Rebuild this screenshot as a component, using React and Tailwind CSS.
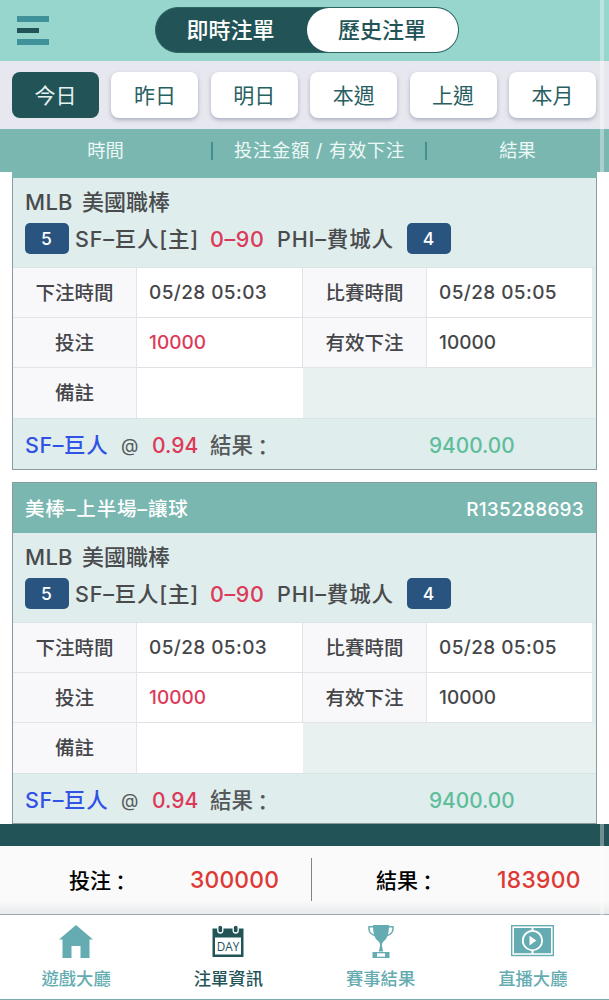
import React from "react";

const days = ["今日", "昨日", "明日", "本週", "上週", "本月"];

function Header() {
  return (
    <header className="flex h-[61px] shrink-0 items-start bg-[#97d6cd] pt-[7px]">
      <div className="ml-[17px] mt-[9px] flex w-8 flex-col gap-[6px]">
        <span className="h-[5.5px] w-8 bg-[#3f919a]" />
        <span className="h-[5.5px] w-[22px] bg-[#225457]" />
        <span className="h-[5.5px] w-8 bg-[#3f919a]" />
      </div>
      <div className="ml-[106px] flex h-[46px] w-[304px] rounded-full border border-[#2c6563] bg-[#225457] text-[22px] font-medium">
        <div className="flex w-[151px] items-center justify-center pr-0.5 pt-px text-white">即時注單</div>
        <div className="flex w-[151px] items-center justify-center rounded-full bg-white pr-px pt-px text-[#225457]">歷史注單</div>
      </div>
    </header>
  );
}

function DayTabs() {
  return (
    <nav className="flex h-[68px] shrink-0 gap-[12.4px] bg-[#e7e8ef] pl-3 pt-[11px]">
      {days.map((d, i) => (
        <button
          key={d}
          className={
            "flex h-[46px] w-[87px] shrink-0 items-center justify-center rounded-[8px] text-[21px] pt-px " +
            (i === 0
              ? "bg-[#225457] text-[#e4f2ef]"
              : "bg-white text-[#286062] shadow-[0_2px_4px_rgba(60,65,110,0.35)]")
          }
        >
          {d}
        </button>
      ))}
    </nav>
  );
}

function ColumnHeads() {
  return (
    <div className="flex h-[43px] shrink-0 items-center bg-[#7ab7b1] text-[18.3px] text-[#edf9f6]">
      <span className="w-[211px] pt-px text-center">時間</span>
      <span className="h-[18px] w-[2px] bg-[#438f8e]" />
      <span className="w-[212px] whitespace-pre pl-px pt-px text-center tracking-[0.7px]">投注金額 / 有效下注</span>
      <span className="h-[18px] w-[2px] bg-[#438f8e]" />
      <span className="w-[181px] pt-px text-center">結果</span>
    </div>
  );
}

function Badge({ children }) {
  return (
    <span className="flex h-[31px] w-[44px] shrink-0 items-center justify-center rounded-[5px] bg-[#28547f] pr-px pt-px text-[17.5px] font-medium text-white">
      {children}
    </span>
  );
}

function Colon() {
  return <span className="inline-block translate-y-[2px] -translate-x-px">：</span>;
}

function Label({ children, className = "" }) {
  return (
    <div className={"flex items-center justify-center border-r border-[#e2e4ea] bg-[#f8f8fb] pt-0.5 text-[19.5px] font-medium " + className}>
      {children}
    </div>
  );
}

function Value({ children, className = "" }) {
  return (
    <div className={"flex items-center border-[#dfe2e6] bg-white pl-3 pt-0.5 text-[19px] " + className}>{children}</div>
  );
}

function Bet() {
  return (
    <>
      <div className="h-[89px] pl-3 pt-[9px] text-[#494b4d]">
        <div className="flex h-[30px] items-center whitespace-pre text-[22px] leading-[30px]">
          <span className="w-[57px] text-[22px] font-medium tracking-[0.3px]">MLB</span>
          <span className="font-medium">美國職棒</span>
        </div>
        <div className="mt-[6px] flex h-[31px] items-center whitespace-nowrap text-[21.5px]">
          <Badge>5</Badge>
          <span className="ml-[6px] w-[135px] pt-0.5 font-medium tracking-[0.8px]">SF–巨人[主]</span>
          <span className="w-[67px] pt-0.5 font-medium tracking-[0.6px] text-[#dc3a59]">0–90</span>
          <span className="w-[130px] pt-0.5 font-medium tracking-[0.85px]">PHI–費城人</span>
          <Badge>4</Badge>
        </div>
      </div>
      <div className="grid h-[151px] grid-cols-[124px_166px_124px_165px] grid-rows-[50px_50px_50px] border-t border-[#dbe4e6] text-[#454649]">
        <Label className="border-b">下注時間</Label>
        <Value className="border-b border-r font-medium tracking-[0.4px]">05/28 05:03</Value>
        <Label className="border-b">比賽時間</Label>
        <Value className="border-b font-medium tracking-[0.4px]">05/28 05:05</Value>
        <Label className="border-b">投注</Label>
        <Value className="border-b border-r font-medium text-[#dc3a59]">10000</Value>
        <Label className="border-b">有效下注</Label>
        <Value className="border-b font-medium">10000</Value>
        <Label>備註</Label>
        <Value />
        <div className="col-span-2 -mr-1 bg-[#e8f0f0]" />
      </div>
      <div className="flex h-[50px] items-center whitespace-nowrap border-t border-[#d8e5e7] pl-3 pt-1 text-[21.5px] text-[#55585a]">
        <span className="w-[96px] font-medium tracking-[0.6px] text-[#3152e6]">SF–巨人</span>
        <span className="w-[31px] text-[18px]">@</span>
        <span className="w-[58px] text-[21px] font-medium text-[#dc3a59]">0.94</span>
        <span className="w-[219px] font-medium">結果<Colon /></span>
        <span className="text-[20.8px] font-medium text-[#5fbd9c]">9400.00</span>
      </div>
    </>
  );
}

const HomeIcon = () => (
  <svg width="34" height="34" viewBox="0 0 34 34" fill="#64acb1">
    <path d="M17 0 34 14.5H30.5V33H21.5V21H12.5V33H3.5V14.5H0Z" />
  </svg>
);

const DayIcon = () => (
  <svg width="32" height="34" viewBox="0 0 32 34">
    <path d="M.5 3.5H31.5V32H.5Z" fill="#225457" />
    <path d="M3 12.5H29V29.5H3Z" fill="#fff" />
    <rect x="5.8" y="0" width="5" height="8" rx="2.5" fill="#225457" stroke="#fff" strokeWidth="1.3" />
    <rect x="21.2" y="0" width="5" height="8" rx="2.5" fill="#225457" stroke="#fff" strokeWidth="1.3" />
    <text x="16" y="25.8" textAnchor="middle" fontSize="13.5" textLength="22.5" lengthAdjust="spacingAndGlyphs" fill="#225457" fontFamily="Open Sans, sans-serif">DAY</text>
  </svg>
);

const TrophyIcon = () => (
  <svg width="26" height="34" viewBox="0 0 26 34" fill="#64acb1">
    <path d="M5 0H21C21 8 19.5 13 16.5 15.5C14.4 17.5 13.8 18.5 14 21L15.2 26.5H10.8L12 21C12.2 18.5 11.6 17.5 9.5 15.5C6.5 13 5 8 5 0Z" />
    <path d="M5 1.8H1C.5 6 2.5 9.3 7 10.5M21 1.8H25C25.5 6 23.5 9.3 19 10.5" fill="none" stroke="#64acb1" strokeWidth="1.5" />
    <path d="M4.5 27H21.5V33H4.5Z" />
    <path d="M9 28.3H17V31.7H9Z" fill="#fff" />
  </svg>
);

const LiveIcon = () => (
  <svg width="43" height="32" viewBox="0 0 43 32">
    <rect x=".7" y=".7" width="41.6" height="29.8" fill="#fff" stroke="#64acb1" strokeWidth="1.4" />
    <path d="M3 3H40V28.2H3Z" fill="#64acb1" />
    <path d="M21.5 2V5.5M21.5 25.5V29" stroke="#fff" strokeWidth="2" />
    <circle cx="21.5" cy="15.6" r="9.7" fill="#64acb1" stroke="#fff" strokeWidth="1.8" />
    <path d="M18.5 10.8 25.3 15.6 18.5 20.4Z" fill="#fff" />
  </svg>
);

const navItems = [
  { label: "遊戲大廳", Icon: HomeIcon },
  { label: "注單資訊", Icon: DayIcon, active: true },
  { label: "賽事結果", Icon: TrophyIcon },
  { label: "直播大廳", Icon: LiveIcon },
];

export default function App() {
  return (
    <div className="relative flex h-[1000px] w-[609px] flex-col overflow-hidden bg-white font-['Inter','Noto_Sans_CJK_TC',sans-serif]">
      <Header />
      <DayTabs />
      <ColumnHeads />
      <main className="h-[652px] shrink-0 px-3">
        <section className="h-[298px] w-[585px] border-x border-b border-[#8b9a9f] bg-[#dfeded]">
          <div className="-mx-px h-[6px] bg-[#7ab7b1]" />
          <Bet />
        </section>
        <section className="mt-3 h-[342px] w-[585px] border border-[#8b9a9f] bg-[#dfeded]">
          <div className="flex h-[50px] items-center justify-between bg-[#7ab7b1] px-3 pt-1 text-[19.5px] text-white">
            <span className="font-medium tracking-[0.85px]">美棒–上半場–讓球</span>
            <span className="text-[19px] font-medium tracking-[0.25px]">R135288693</span>
          </div>
          <Bet />
        </section>
      </main>
      <div className="h-[22px] shrink-0 bg-[#225457]" />
      <div className="flex h-[69px] shrink-0 items-center whitespace-nowrap border-b border-[#9ba7ad] bg-gradient-to-b from-[#fafafa] from-80% to-[#e9eaec] text-[21px] font-medium text-black">
        <span className="ml-[69px] w-[121px] pt-0.5">投注<Colon /></span>
        <span className="w-[121px] text-[22.8px] tracking-[0.2px] text-[#dd3935]">300000</span>
        <span className="-mt-0.5 h-[43px] w-px bg-[#7b858c]" />
        <span className="ml-[64px] w-[121px] pt-0.5">結果<Colon /></span>
        <span className="text-[22.8px] tracking-[0.3px] text-[#dd3935]">183900</span>
      </div>
      <nav className="flex h-[85px] shrink-0 border-b border-[#7ca9ad] bg-white">
        {navItems.map(({ label, Icon, active }) => (
          <div key={label} className="flex w-[152.25px] flex-col items-center pt-[10px]">
            <div className="flex h-[35px] items-start"><Icon /></div>
            <span className={"mt-[6px] text-[17.3px] leading-[26px] font-medium " + (active ? "text-[#225457]" : "text-[#64acb1]")}>{label}</span>
          </div>
        ))}
      </nav>
      <div className="absolute left-[600px] top-0 h-[172px] w-[4px] bg-white/35" />
      <div className="absolute left-[600px] top-[824px] h-[91px] w-[4px] bg-white/35" />
    </div>
  );
}
